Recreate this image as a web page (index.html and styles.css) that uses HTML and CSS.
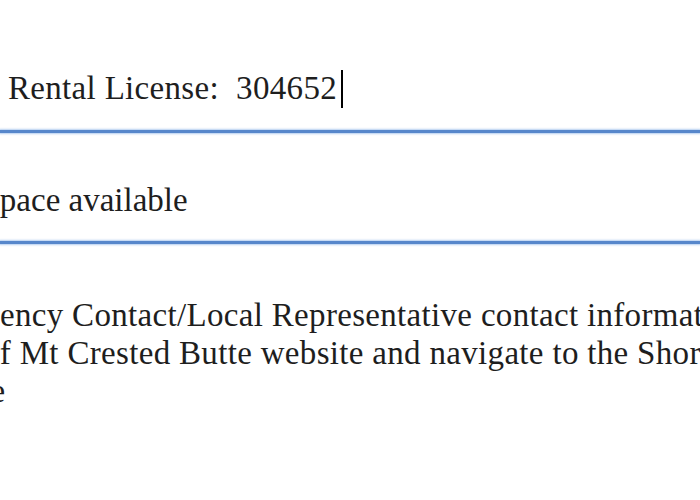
FILE: index.html
```html
<!DOCTYPE html>
<html>
<head>
<meta charset="utf-8">
<link rel="stylesheet" href="styles.css">
</head>
<body>
<div class="doc">
  <div class="field field-license">
    <span class="text spaced">Rental License:&nbsp; 304652</span><span class="caret"></span>
  </div>
  <div class="rule"></div>
  <div class="field field-space">
    <span class="text clip-s">space available</span>
  </div>
  <div class="rule"></div>
  <div class="para spaced">
    <div class="pline l1">Emergency Contact/Local Representative contact information</div>
    <div class="pline l2">of Mt Crested Butte website and navigate to the Short Term Rentals</div>
    <div class="pline l3">page</div>
  </div>
</div>
</body>
</html>
```
FILE: styles.css
```css
html, body {
  margin: 0;
  padding: 0;
  background: #ffffff;
}
body {
  width: 700px;
  height: 500px;
  overflow: hidden;
}
.doc {
  font-family: "Liberation Serif", "Times New Roman", serif;
  font-size: 33px;
  line-height: 37.5px;
  color: #1e1e1e;
  display: flex;
  flex-direction: column;
}
.spaced {
  letter-spacing: 0.32px;
}
.field {
  white-space: nowrap;
  height: 37.5px;
}
.field-license {
  padding-top: 70px;
  padding-left: 8px;
}
.field-space {
  padding-top: 49px;
}
.clip-s {
  display: inline-block;
  margin-left: -13px;
}
.caret {
  display: inline-block;
  width: 0;
  height: 38px;
  border-left: 2px solid #000;
  margin-left: 4px;
  vertical-align: -9px;
}
.rule {
  height: 3px;
  margin-top: 22px;
  background: #5787cb;
  box-shadow: 0 0 2px 1px rgba(130, 172, 228, 0.6);
}
.para {
  margin-top: 52px;
  line-height: 38px;
}
.pline {
  white-space: nowrap;
}
.l1 { margin-left: -89px; }
.l2 { margin-left: -17px; }
.l3 { margin-left: -58px; }
```
